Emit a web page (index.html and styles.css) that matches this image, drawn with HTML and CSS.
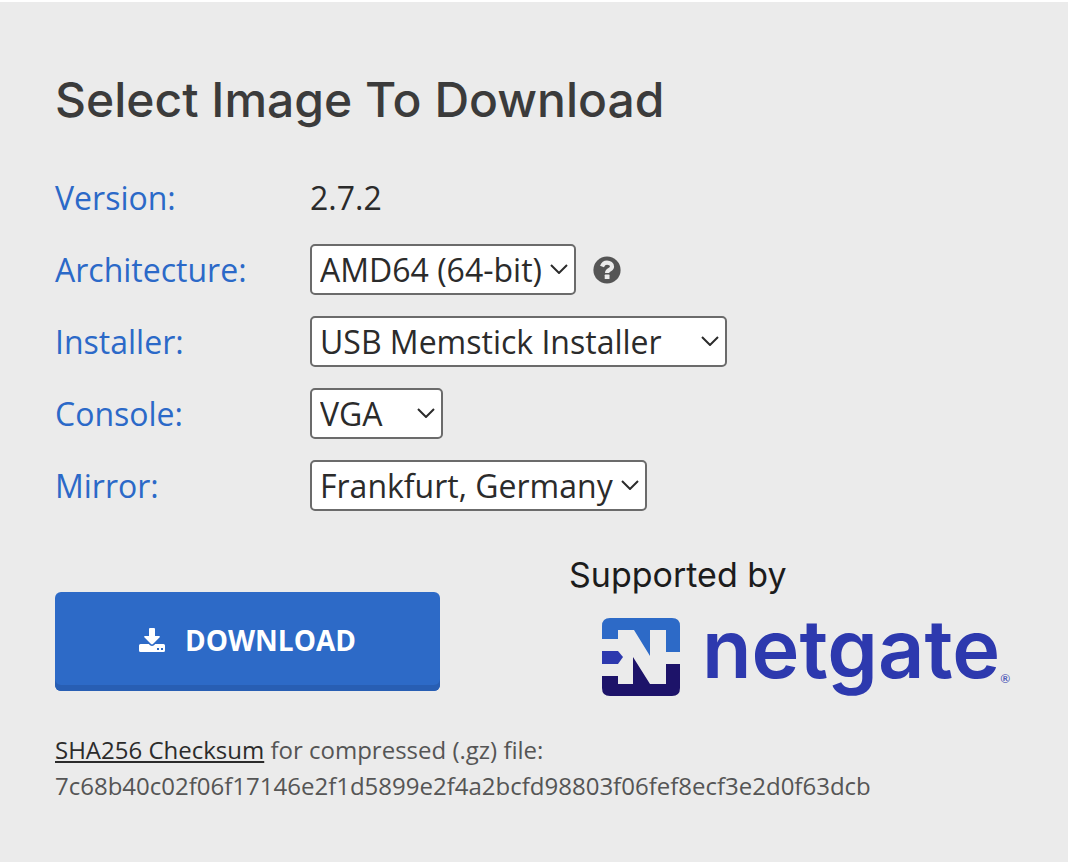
FILE: index.html
```html
<!DOCTYPE html>
<html lang="en">
<head>
<meta charset="utf-8">
<meta name="viewport" content="width=device-width, initial-scale=1">
<title>Select Image To Download</title>
<link rel="stylesheet" href="styles.css">
</head>
<body>
<main class="panel">
  <h1 class="title">Select Image To Download</h1>
  <form class="form">
    <div class="fields">
      <span class="label">Version:</span>
      <div class="field">2.7.2</div>

      <label class="label" for="architecture">Architecture:</label>
      <div class="field">
        <span class="picker picker-architecture">
          <select class="select" id="architecture"><option>AMD64 (64-bit)</option></select>
          <svg class="chevron" viewBox="0 0 18 10" aria-hidden="true"><path d="M1 1l8 8 8-8"/></svg>
        </span>
        <button class="help" type="button" aria-label="Help">
          <svg class="help-icon" viewBox="0 0 28 28" aria-hidden="true">
            <circle cx="14" cy="14" r="13.6" fill="#555"/>
            <path d="M9 10.400C10 7.800 11.600 6.600 14 6.600c2.900 0 5 1.600 5 3.900 0 3.500-4.900 3-4.900 6.400" fill="none" stroke="#ebebeb" stroke-width="4.200"/>
            <rect x="11.700" y="18.600" width="4.800" height="4.500" rx=".6" fill="#ebebeb"/>
          </svg>
        </button>
      </div>

      <label class="label" for="installer">Installer:</label>
      <div class="field">
        <span class="picker picker-installer">
          <select class="select" id="installer"><option>USB Memstick Installer</option></select>
          <svg class="chevron" viewBox="0 0 18 10" aria-hidden="true"><path d="M1 1l8 8 8-8"/></svg>
        </span>
      </div>

      <label class="label" for="console">Console:</label>
      <div class="field">
        <span class="picker picker-console">
          <select class="select" id="console"><option>VGA</option></select>
          <svg class="chevron" viewBox="0 0 18 10" aria-hidden="true"><path d="M1 1l8 8 8-8"/></svg>
        </span>
      </div>

      <label class="label" for="mirror">Mirror:</label>
      <div class="field">
        <span class="picker picker-mirror">
          <select class="select" id="mirror"><option>Frankfurt, Germany</option></select>
          <svg class="chevron" viewBox="0 0 18 10" aria-hidden="true"><path d="M1 1l8 8 8-8"/></svg>
        </span>
      </div>
    </div>

    <div class="actions">
      <button class="download" type="submit">
        <svg class="download-icon" viewBox="0 0 26 24" aria-hidden="true">
          <path fill="#fff" fill-rule="evenodd" d="M11 0h4a1 1 0 0 1 1 1v7h4.200q1.200.2.500 1.300l-6.700 6.700q-1 .8-2 0L5.300 9.300q-.7-1.100.5-1.300H10V1a1 1 0 0 1 1-1zM1.500 16h8.300l1.200 1.200q2 1.600 4 0l1.200-1.200h8.300a1.500 1.500 0 0 1 1.500 1.500v5a1.500 1.500 0 0 1-1.500 1.500h-23A1.500 1.500 0 0 1 0 22.500v-5A1.500 1.500 0 0 1 1.500 16zM18 20v2h2v-2zM22 20v2h2v-2z"/>
        </svg>
        DOWNLOAD
      </button>
      <div class="sponsor">
        <span class="sponsor-caption">Supported by</span>
        <div class="brand">
          <svg class="brand-mark" viewBox="0 0 78 78" aria-hidden="true">
            <path fill="#2d6ac7" d="M0 21V8Q0 0 8 0h62q8 0 8 8v26H64V12H48v26L32 12H16v9z"/>
            <path fill="#2d39ae" d="M0 33h16l5 6-5 7H0z"/>
            <path fill="#1d1369" d="M0 58h16v8h15V39l17 27h16V46h14v24q0 8-8 8H8q-8 0-8-8z"/>
          </svg>
          <span class="brand-name">netgate</span><span class="registered">®</span>
        </div>
      </div>
    </div>
  </form>
  <p class="checksum"><a class="checksum-link" href="#sha256">SHA256 Checksum</a> for compressed (.gz) file:<br>7c68b40c02f06f17146e2f1d5899e2f4a2bcfd98803f06fef8ecf3e2d0f63dcb</p>
</main>
</body>
</html>
```
FILE: styles.css
```css
* { box-sizing: border-box; }

body {
  margin: 0;
  background: #ebebeb;
  color: #2b2b2b;
  font-family: "Open Sans", sans-serif;
  font-size: 32px;
}

.panel {
  min-height: 100vh;
  border-top: 2px solid #fff;
  padding: 64px 55px 56px;
}

.title {
  margin: 0 0 27px;
  color: #3b3b3b;
  font-family: Inter, sans-serif;
  font-size: 48px;
  font-weight: 500;
  line-height: 68px;
}

.fields {
  display: grid;
  grid-template-columns: 255px 1fr;
  grid-auto-rows: 72px;
  align-items: center;
}

.label { color: #2b69c8; }

.field {
  display: flex;
  align-items: center;
  gap: 17px;
}

.picker {
  display: grid;
  grid-template-areas: "control";
  align-items: center;
}

.picker-architecture { width: 266px; }
.picker-installer { width: 417px; }
.picker-console { width: 133px; }
.picker-mirror { width: 337px; }

.select {
  grid-area: control;
  width: 100%;
  height: 51px;
  padding: 0 0 0 8px;
  appearance: none;
  border: 2px solid #6b6b6b;
  border-radius: 5px;
  background: #fff;
  color: #2b2b2b;
  font: inherit;
}

.chevron {
  grid-area: control;
  justify-self: end;
  width: 18px;
  height: 10px;
  margin-right: 8px;
  fill: none;
  stroke: #2b2b2b;
  stroke-width: 2;
  pointer-events: none;
}

.help {
  display: flex;
  padding: 2px 0 0;
  border: 0;
  background: none;
}

.help-icon {
  width: 28px;
  height: 28px;
}

.actions {
  display: flex;
  align-items: flex-end;
  justify-content: space-between;
  margin-top: 32px;
}

.download {
  display: flex;
  align-items: center;
  justify-content: center;
  gap: 20px;
  width: 385px;
  height: 99px;
  margin-bottom: 12px;
  padding: 0 0 3px;
  border: 0;
  border-radius: 6px;
  background: #2d6ac7;
  box-shadow: inset 0 -6px #285eb3;
  color: #fff;
  font: 700 28px "Open Sans", sans-serif;
}

.download-icon {
  width: 26px;
  height: 24px;
}

.sponsor {
  width: 444px;
  padding-top: 2px;
}

.sponsor-caption {
  display: block;
  color: #1c1c1c;
  font: 400 34px/40px Inter, sans-serif;
}

.brand {
  display: flex;
  align-items: center;
  padding-left: 33px;
}

.brand-mark {
  width: 78px;
  height: 78px;
  margin: 16px 22px 0 0;
}

.brand-name {
  color: #2d39ae;
  font: 600 81px/108px Inter, sans-serif;
}

.registered {
  align-self: flex-end;
  color: #2d39ae;
  font: 12px/48px Lato, sans-serif;
}

.checksum {
  margin: 29px 0 0;
  color: #555;
  font-size: 24px;
  line-height: 36px;
  overflow-wrap: anywhere;
}

.checksum-link {
  color: #2b2b2b;
  text-decoration: underline;
}
```
